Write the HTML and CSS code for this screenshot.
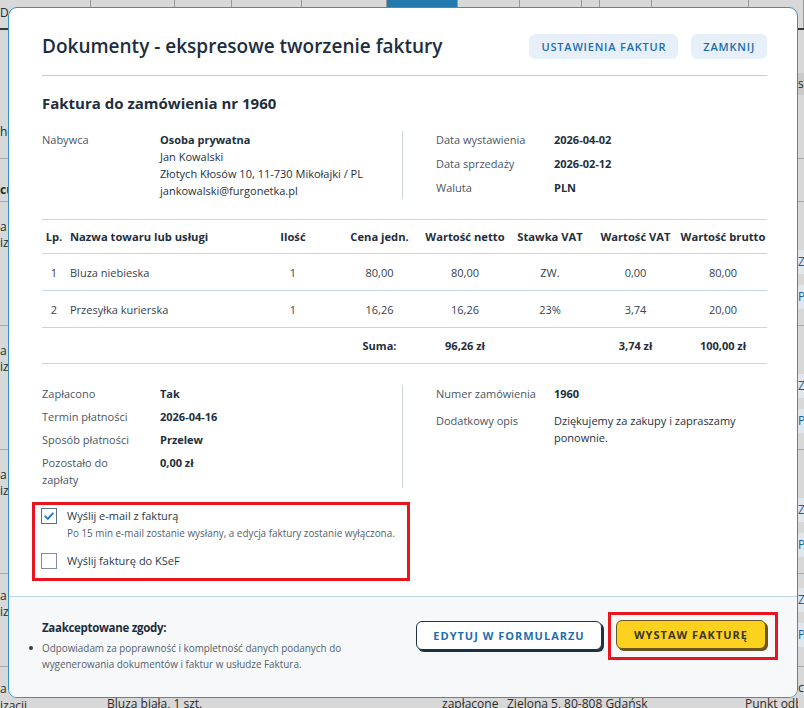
FILE: index.html
```html
<!DOCTYPE html>
<html lang="pl">
<head>
<meta charset="utf-8">
<title>Dokumenty - ekspresowe tworzenie faktury</title>
<link rel="stylesheet" href="styles.css">
</head>
<body>
<div class="page">
  <div class="tabs">
    <div class="tab">Do</div>
    <div class="tab"></div>
    <div class="tab"></div>
    <div class="tab"></div>
    <div class="tab"></div>
    <div class="tab tab-active"></div>
    <div class="tab"></div>
    <div class="tab"></div>
    <div class="tab"></div>
    <div class="tab"></div>
    <div class="tab"></div>
    <div class="tab"></div>
  </div>
  <div class="row row-a">
    <div class="c-left">he</div>
    <div class="c-mid"></div>
    <div class="c-right"><div class="band band-grey">s</div></div>
  </div>
  <div class="row row-b">
    <div class="c-left bold">cu</div>
    <div class="c-mid"></div>
    <div class="c-right"></div>
  </div>
  <div class="row row-c">
    <div class="c-left"><div>a</div><div>iz</div></div>
    <div class="c-mid"></div>
    <div class="c-right"><div class="band">Z</div><div class="band">P</div></div>
  </div>
  <div class="row row-c">
    <div class="c-left"><div>a</div><div>iz</div></div>
    <div class="c-mid"></div>
    <div class="c-right"><div class="band">Z</div><div class="band">P</div></div>
  </div>
  <div class="row row-c">
    <div class="c-left"><div>a</div><div>iz</div></div>
    <div class="c-mid"></div>
    <div class="c-right"><div class="band">Z</div><div class="band">P</div></div>
  </div>
  <div class="row row-f">
    <div class="c-left"><div>a</div><div>iz</div></div>
    <div class="c-mid"></div>
    <div class="c-right"><div class="band">Z</div><div class="band">P</div></div>
  </div>
  <div class="row row-g">
    <div class="g-left"><div>a</div><div>izacji</div></div>
    <div class="g-prod">Bluza biała, 1 szt.</div>
    <div class="g-stat">zapłacone</div>
    <div class="g-addr">Zielona 5, 80-808 Gdańsk</div>
    <div class="g-del">Punkt odbioru</div>
    <div class="g-act">c</div>
  </div>
</div>

<div class="modal">
  <div class="modal-body">
    <header class="head">
      <h1 class="title">Dokumenty - ekspresowe tworzenie faktury</h1>
      <div class="head-actions">
        <button class="btn-soft">USTAWIENIA FAKTUR</button>
        <button class="btn-soft">ZAMKNIJ</button>
      </div>
    </header>
    <div class="divider"></div>
    <h2 class="subtitle">Faktura do zamówienia nr 1960</h2>

    <section class="info">
      <div class="info-col">
        <div class="pair">
          <span class="lbl">Nabywca</span>
          <div class="val">
            <div class="strong">Osoba prywatna</div>
            <div>Jan Kowalski</div>
            <div>Złotych Kłosów 10, 11-730 Mikołajki / PL</div>
            <div>jankowalski@furgonetka.pl</div>
          </div>
        </div>
      </div>
      <div class="info-col info-col-right rows-7">
        <div class="pair"><span class="lbl">Data wystawienia</span><span class="val strong">2026-04-02</span></div>
        <div class="pair"><span class="lbl">Data sprzedaży</span><span class="val strong">2026-02-12</span></div>
        <div class="pair"><span class="lbl">Waluta</span><span class="val strong">PLN</span></div>
      </div>
    </section>

    <div class="items">
      <div class="tr th">
        <div class="cc">Lp.</div>
        <div class="cl">Nazwa towaru lub usługi</div>
        <div class="cc">Ilość</div>
        <div class="cc">Cena jedn.</div>
        <div class="cc">Wartość netto</div>
        <div class="cc">Stawka VAT</div>
        <div class="cc">Wartość VAT</div>
        <div class="cc">Wartość brutto</div>
      </div>
      <div class="tr td">
        <div class="cc">1</div>
        <div class="cl">Bluza niebieska</div>
        <div class="cc">1</div>
        <div class="cc">80,00</div>
        <div class="cc">80,00</div>
        <div class="cc">ZW.</div>
        <div class="cc">0,00</div>
        <div class="cc">80,00</div>
      </div>
      <div class="tr td">
        <div class="cc">2</div>
        <div class="cl">Przesyłka kurierska</div>
        <div class="cc">1</div>
        <div class="cc">16,26</div>
        <div class="cc">16,26</div>
        <div class="cc">23%</div>
        <div class="cc">3,74</div>
        <div class="cc">20,00</div>
      </div>
      <div class="tr tsum">
        <div></div>
        <div></div>
        <div></div>
        <div class="cc">Suma:</div>
        <div class="cc">96,26 zł</div>
        <div></div>
        <div class="cc">3,74 zł</div>
        <div class="cc">100,00 zł</div>
      </div>
    </div>

    <section class="info info2">
      <div class="info-col rows-6">
        <div class="pair"><span class="lbl">Zapłacono</span><span class="val strong">Tak</span></div>
        <div class="pair"><span class="lbl">Termin płatności</span><span class="val strong">2026-04-16</span></div>
        <div class="pair"><span class="lbl">Sposób płatności</span><span class="val strong">Przelew</span></div>
        <div class="pair"><span class="lbl">Pozostało do zapłaty</span><span class="val strong">0,00 zł</span></div>
      </div>
      <div class="info-col info-col-right rows-10">
        <div class="pair"><span class="lbl">Numer zamówienia</span><span class="val strong">1960</span></div>
        <div class="pair"><span class="lbl">Dodatkowy opis</span><span class="val">Dziękujemy za zakupy i zapraszamy ponownie.</span></div>
      </div>
    </section>

    <div class="checks">
      <div class="check-row">
        <span class="box box-on"><svg viewBox="0 0 16 16" width="16" height="16"><path d="M4.2 8.4 L6.8 10.9 L11.8 5.4" fill="none" stroke="#1f7bd0" stroke-width="2" stroke-linecap="round" stroke-linejoin="round"/></svg></span>
        <span class="check-label">Wyślij e-mail z fakturą</span>
      </div>
      <div class="check-hint">Po 15 min e-mail zostanie wysłany, a edycja faktury zostanie wyłączona.</div>
      <div class="check-row check-row2">
        <span class="box"></span>
        <span class="check-label">Wyślij fakturę do KSeF</span>
      </div>
    </div>
  </div>

  <footer class="foot">
    <div class="consents">
      <div class="consents-title">Zaakceptowane zgody:</div>
      <ul class="consents-list">
        <li><span class="dot"></span><span>Odpowiadam za poprawność i kompletność danych podanych do wygenerowania dokumentów i faktur w usłudze Faktura.</span></li>
      </ul>
    </div>
    <div class="foot-actions">
      <button class="btn-outline">EDYTUJ W FORMULARZU</button>
      <div class="highlight">
        <button class="btn-yellow">WYSTAW FAKTURĘ</button>
      </div>
    </div>
  </footer>
</div>
</body>
</html>
```

FILE: styles.css
```css
* { box-sizing: border-box; }

html, body {
  margin: 0;
  padding: 0;
}

body {
  width: 804px;
  height: 708px;
  overflow: hidden;
  position: relative;
  background: #d8d8d8;
  font-family: "Open Sans", "Liberation Sans", sans-serif;
  color: #222f3c;
}

/* ---------- background page ---------- */
.page {
  width: 804px;
  height: 708px;
  font-size: 12px;
  color: #2b2b2b;
}

.tabs {
  display: grid;
  grid-template-columns: 91px 84px 57px 70px 85px 71px 62px 62px 18px 52px 97px 1fr;
  height: 30px;
  border-bottom: 2px solid #3a3a3a;
}

.tab {
  border-right: 1px solid #9a9a9a;
  padding: 4px 0 0 0;
  line-height: 17px;
  overflow: hidden;
}

.tab-active { background: #2279ad; }

.row {
  display: grid;
  grid-template-columns: 8px 790px 1fr;
  border-bottom: 1px solid #a9a9a9;
  line-height: 16px;
  overflow: hidden;
}

.row-a { height: 129px; }
.row-b { height: 43px; }
.row-c { height: 124px; }
.row-f { height: 93px; }

.c-left { padding-top: 17px; overflow: hidden; white-space: nowrap; }
.row-a .c-left { padding-top: 94px; }
.row-b .c-left { padding-top: 23px; }
.row-f .c-left { padding-top: 14px; }
.bold { font-weight: 700; }

.c-right { padding-top: 48px; overflow: hidden; }
.row-a .c-right { padding-top: 43px; }
.row-b .c-right { padding-top: 0; }
.row-f .c-right { padding-top: 14px; }

.band {
  height: 24px;
  line-height: 24px;
  background: #e1e6ec;
  color: #1f5f8f;
  margin-bottom: 11px;
}

.band-grey { background: #c9c9c9; height: 22px; line-height: 22px; color: #2b2b2b; }

.row-g {
  display: grid;
  grid-template-columns: 107px 335px 65px 238px 53px 1fr;
  border-bottom: 0;
  line-height: 17px;
  height: 60px;
}

.g-left { padding-top: 13px; white-space: nowrap; }
.g-prod, .g-stat, .g-addr, .g-del { padding-top: 28px; white-space: nowrap; overflow: hidden; }
.g-act { padding-top: 12px; }

/* ---------- modal ---------- */
.modal {
  position: absolute;
  left: 8px;
  top: 7px;
  width: 790px;
  height: 691px;
  background: #ffffff;
  border: 1px solid #3391cf;
  border-radius: 9px;
  overflow: hidden;
  display: flex;
  flex-direction: column;
}

.modal-body {
  padding: 26px 30px 0 33px;
}

.head {
  display: flex;
  align-items: center;
  justify-content: space-between;
  height: 25px;
}

.title {
  margin: 0;
  font-size: 19px;
  font-weight: 600;
  color: #1d2e3e;
  line-height: 25px;
}

.head-actions {
  display: flex;
  gap: 13px;
}

.btn-soft {
  height: 25px;
  padding: 0 12px;
  border: 0;
  border-radius: 6px;
  background: #e7f0f9;
  color: #1c6dab;
  font-family: "Open Sans", "Liberation Sans", sans-serif;
  font-size: 11px;
  font-weight: 600;
  letter-spacing: 0.8px;
}

.divider {
  margin-top: 16px;
  height: 1px;
  background: #c6ccd3;
}

.subtitle {
  margin: 17px 0 0;
  font-size: 15px;
  line-height: 20px;
  font-weight: 700;
  color: #1f2e3d;
}

/* info blocks */
.info {
  display: grid;
  grid-template-columns: 360px 1fr;
  margin-top: 18px;
  font-size: 11px;
  line-height: 17px;
}

.info-col {
  display: flex;
  flex-direction: column;
}

.info-col-right {
  border-left: 1px solid #c9d3dd;
  padding-left: 33px;
}

.rows-7 { gap: 7px; }
.rows-6 { gap: 6px; }
.rows-10 { gap: 10px; }

.pair {
  display: flex;
}

.lbl {
  flex: 0 0 104px;
  margin-right: 14px;
  color: #4b5663;
}

.val {
  flex: 1 1 auto;
  color: #243140;
}

.strong {
  font-weight: 700;
  color: #222f3c;
}

/* items table */
.items {
  margin-top: 20px;
  font-size: 11px;
}

.tr {
  display: grid;
  grid-template-columns: 24px 182px 90px 83px 88px 82px 89px 86px;
  align-items: center;
  border-bottom: 1px solid #c6d5e2;
}

.th {
  border-top: 1px solid #c6d5e2;
  height: 35px;
  font-weight: 700;
  color: #1f2e3d;
  font-size: 11.2px;
}

.td {
  height: 37px;
  color: #354250;
}

.tsum {
  height: 36px;
  font-weight: 700;
  color: #1f2e3d;
}

.cc { text-align: center; white-space: nowrap; }
.cl { padding-left: 4px; white-space: nowrap; }

.info2 {
  margin-top: 21px;
}

/* checkboxes */
.checks {
  margin: 14px 0 0 -10px;
  width: 378px;
  border: 3px solid #e8151e;
  padding: 3px 6px 9px;
}

.check-row {
  display: flex;
  align-items: center;
  gap: 10px;
  height: 16px;
}

.check-row2 { margin-top: 13px; }

.box {
  width: 16px;
  height: 16px;
  flex: 0 0 16px;
  border: 1px solid #7f8d9c;
  background: #fff;
  display: block;
}

.box svg { display: block; margin: -1px 0 0 -1px; }

.box-on { border-color: #5b6f84; }

.check-label {
  font-size: 11px;
  line-height: 16px;
  color: #2c3946;
}

.check-hint {
  margin: 2px 0 0 26px;
  font-size: 9.9px;
  line-height: 14px;
  color: #55606c;
  white-space: nowrap;
}

/* footer */
.foot {
  margin-top: 15px;
  flex: 1 1 auto;
  background: #f6f8fa;
  border-top: 1px solid #c3d4e2;
  display: flex;
  justify-content: space-between;
  align-items: flex-start;
  padding: 0 30px 0 33px;
}

.consents {
  padding-top: 22px;
  width: 320px;
}

.consents-title {
  font-size: 11.5px;
  line-height: 18px;
  font-weight: 700;
  letter-spacing: -0.3px;
  color: #1f2e3d;
}

.consents-list {
  list-style: none;
  margin: 3px 0 0;
  padding: 0;
}

.consents-list li {
  display: flex;
  align-items: flex-start;
  margin-left: -13px;
  gap: 9px;
  font-size: 9.9px;
  line-height: 16px;
  color: #55606c;
}

.dot {
  flex: 0 0 4px;
  width: 4px;
  height: 4px;
  border-radius: 50%;
  background: #333d48;
  margin-top: 6px;
}

.foot-actions {
  display: flex;
  align-items: flex-start;
  gap: 4px;
  margin-top: 15px;
  margin-right: -11px;
}

.btn-outline {
  margin-top: 9px;
  width: 186px;
  height: 29px;
  margin-right: 2px;
  background: #ffffff;
  border: 1px solid #1c3347;
  border-radius: 6px;
  box-shadow: 2px 2px 0 #1c3347;
  color: #1e6fae;
  font-family: "Open Sans", "Liberation Sans", sans-serif;
  font-size: 11px;
  font-weight: 700;
  letter-spacing: 1px;
}

.highlight {
  border: 3px solid #e8151e;
  padding: 5px 7px 6px 5px;
}

.btn-yellow {
  display: block;
  width: 150px;
  height: 29px;
  margin-right: 2px;
  margin-bottom: 2px;
  background: #fdd21e;
  border: 1px solid #6a5524;
  border-radius: 6px;
  box-shadow: 2px 2px 0 #6e5420;
  color: #3a3526;
  font-family: "Open Sans", "Liberation Sans", sans-serif;
  font-size: 11px;
  font-weight: 700;
  letter-spacing: 1px;
}
```
